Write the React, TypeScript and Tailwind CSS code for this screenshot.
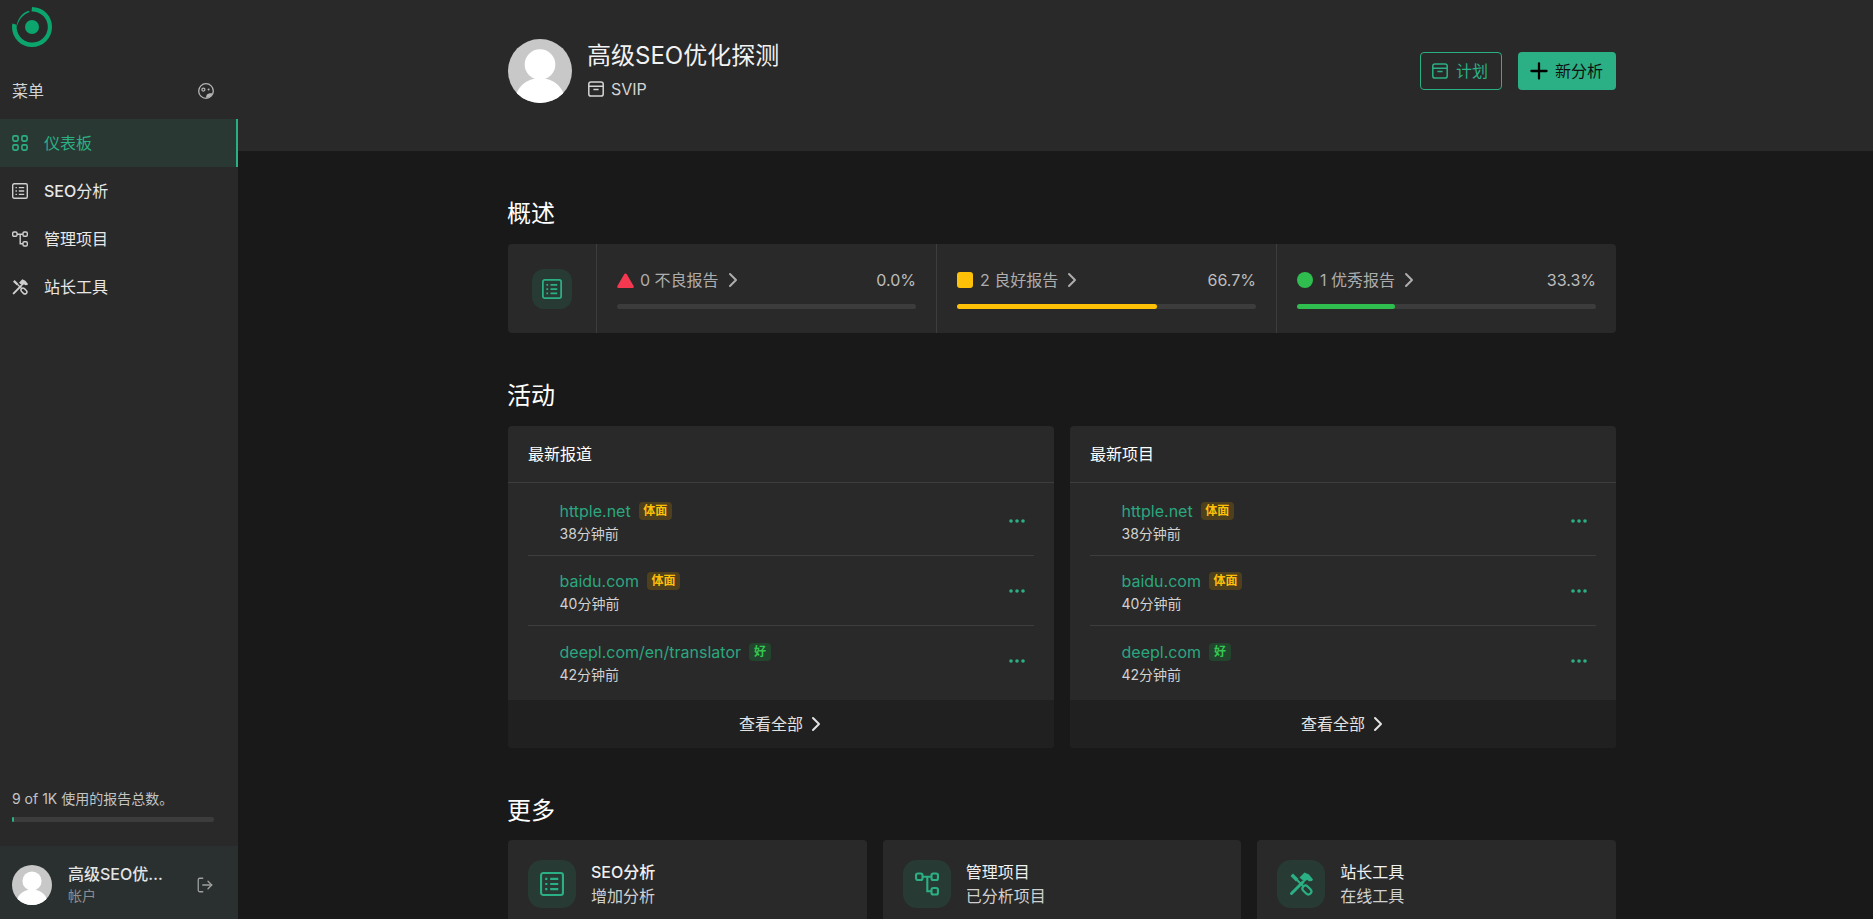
import React from "react";
import { ChevronRight, LogOut, Plus } from "lucide-react";

const font = { fontFamily: "Inter, 'Noto Sans CJK SC', sans-serif" };

function Avatar({ size }: { size: number }) {
  return (
    <svg width={size} height={size} viewBox="0 0 64 64" className="shrink-0">
      <defs>
        <clipPath id={`av${size}`}>
          <circle cx="32" cy="32" r="32" />
        </clipPath>
      </defs>
      <g clipPath={`url(#av${size})`}>
        <rect width="64" height="64" fill="#c8c8c8" />
        <circle cx="32" cy="25.5" r="15.3" fill="#fff" />
        <ellipse cx="32" cy="62" rx="25" ry="23" fill="#fff" />
      </g>
    </svg>
  );
}

function Logo() {
  return (
    <svg width="40" height="40" viewBox="0 0 40 40" className="block">
      <path
        fillRule="evenodd"
        fill="#0ba56d"
        d="M20 0a20 20 0 1 1-20 20c0-1.2.2-2.4.4-3.4l4.4 1.1A15.6 15.6 0 1 0 19.5 4.4z"
      />
      <path fill="#0ba56d" d="M5 17.6C6 11 11 5.2 17 3.8l.6 1.2C12 7 7 12 5.6 18z" />
      <circle cx="20" cy="20" r="7" fill="#0ba56d" />
    </svg>
  );
}

function GridIcon() {
  return (
    <svg width="16" height="16" viewBox="0 0 16 16" fill="none" stroke="currentColor" strokeWidth="1.6" className="shrink-0">
      <rect x="0.9" y="0.9" width="5.2" height="5.2" rx="1.5" />
      <rect x="9.9" y="0.9" width="5.2" height="5.2" rx="1.5" />
      <rect x="0.9" y="9.9" width="5.2" height="5.2" rx="1.5" />
      <rect x="9.9" y="9.9" width="5.2" height="5.2" rx="1.5" />
    </svg>
  );
}

function ListIcon({ size = 16 }: { size?: number }) {
  return (
    <svg width={size} height={size} viewBox="0 0 16 16" fill="none" stroke="currentColor" strokeWidth="1.4" className="shrink-0">
      <rect x="0.7" y="0.7" width="14.6" height="14.6" rx="1.5" />
      <path d="M6.8 4.6h5.4M6.8 8h5.4M6.8 11.4h5.4" />
      <path d="M3.5 4.6h1.4M3.5 8h1.4M3.5 11.4h1.4" />
    </svg>
  );
}

function NodesIcon({ size = 16 }: { size?: number }) {
  return (
    <svg width={size} height={size} viewBox="0 0 16 16" fill="none" stroke="currentColor" strokeWidth="1.4" className="shrink-0">
      <rect x="0.7" y="1" width="4.3" height="4.3" rx="1.2" />
      <rect x="11" y="1" width="4.3" height="4.3" rx="1.2" />
      <rect x="11" y="10.7" width="4.3" height="4.3" rx="1.2" />
      <path d="M5 3.2h6M8.2 3.2v9.6H11" />
    </svg>
  );
}

function ToolsIcon({ size = 16 }: { size?: number }) {
  return (
    <svg width={size} height={size} viewBox="0 0 24 24" fill="none" stroke="currentColor" className="shrink-0">
      <path d="M1.5 4L4 1.5 9.5 7 7 9.5z" fill="currentColor" stroke="none" />
      <path d="M8 8l6 6" strokeWidth="2" />
      <rect x="12.9" y="15" width="10" height="6" rx="3" strokeWidth="2.2" transform="rotate(45 17.9 18)" />
      <path d="M2.5 21.5L14 10" strokeWidth="3" strokeLinecap="round" />
      <path d="M10.5 5.5L15.5 0.5 20 2.5 24 7.5 23 9 20 9.2 18 7.8 15.5 9.8z" fill="currentColor" stroke="none" />
    </svg>
  );
}

function PaletteIcon() {
  return (
    <svg width="16" height="16" viewBox="0 0 16 16" fill="none" stroke="currentColor" strokeWidth="1.3" className="shrink-0">
      <circle cx="8" cy="8" r="7.3" />
      <circle cx="5.4" cy="6.6" r="1.5" />
      <circle cx="10.6" cy="6.4" r="1" fill="currentColor" stroke="none" />
      <path d="M8 14.8c0-2.6 1.2-4.2 3-4.4 1.2-.1 2.8-.1 3.6-.4-.6 2.6-3.2 4.8-6.6 4.8z" fill="currentColor" stroke="none" />
    </svg>
  );
}

function BoxIcon() {
  return (
    <svg width="16" height="16" viewBox="0 0 16 16" fill="none" stroke="currentColor" strokeWidth="1.5" className="shrink-0">
      <rect x="0.8" y="0.9" width="14.4" height="14.2" rx="2.2" />
      <path d="M0.8 5.2h14.4M5.4 8.4h5.2" />
    </svg>
  );
}

function Dots() {
  return (
    <svg width="16" height="4" viewBox="0 0 16 4" fill="#2bb085" className="shrink-0">
      <circle cx="2" cy="2" r="1.8" />
      <circle cx="8" cy="2" r="1.8" />
      <circle cx="14" cy="2" r="1.8" />
    </svg>
  );
}

function NavItem({ icon, label, latin, active }: { icon: React.ReactNode; label: string; latin?: string; active?: boolean }) {
  return active ? (
    <div className="flex h-12 items-center gap-4 border-r-2 border-[#2bb085] bg-[#2a3833] pl-3 text-base text-[#2bb085]">
      {icon}
      <span>{label}</span>
    </div>
  ) : (
    <div className="flex h-12 items-center gap-4 pl-3 text-base text-[#e8e8e8]">
      <span className="text-[#cfcfcf]">{icon}</span>
      <span>
        {latin ? <span className="font-medium">{latin}</span> : null}
        {label}
      </span>
    </div>
  );
}

function Stat({ marker, label, percent, bar, width }: { marker: React.ReactNode; label: string; percent: string; bar: string; width: string }) {
  return (
    <div className="flex w-[340px] flex-col border-l border-[#3d3d3d] px-5 pt-[24px]">
      <div className="flex h-6 items-center">
        <span className="flex w-[23px] shrink-0 items-center">{marker}</span>
        <span className="text-base text-[#adadad]">{label}</span>
        <ChevronRight size={24} strokeWidth={2} className="ml-[2px] text-[#adadad]" />
        <span className="ml-auto text-base text-[#bdbdbd]">{percent}</span>
      </div>
      <div className="mt-[12px] h-[5px] w-full rounded-full bg-[#3c3c3c]">
        <div className={`h-[5px] rounded-full ${bar}`} style={{ width }} />
      </div>
    </div>
  );
}

type Row = { name: string; time: string; good?: boolean };

function ActivityRow({ row, last }: { row: Row; last?: boolean }) {
  return (
    <div className={`flex h-[70px] items-center pl-[31.5px] ${last ? "" : "border-b border-[#3d3d3d]"}`}>
      <div className="flex-1 pt-[2px]">
        <div className="flex h-[24px] items-center">
          <span className="text-base leading-6 text-[#2ba77f]">{row.name}</span>
          {row.good ? (
            <span className="ml-2 flex h-[18px] w-[22px] items-center justify-center rounded-[4px] bg-[#24452d] text-xs font-bold text-[#35c552]">好</span>
          ) : (
            <span className="ml-2 flex h-[18px] w-[33px] items-center justify-center rounded-[4px] bg-[#4e3f1d] text-xs font-bold text-[#ffc107]">体面</span>
          )}
        </div>
        <div className="mt-[1px] text-sm leading-[20px] text-[#d2d2d2]">{row.time}</div>
      </div>
      <span className="mr-[9px]">
        <Dots />
      </span>
    </div>
  );
}

function ActivityCard({ title, rows }: { title: string; rows: Row[] }) {
  return (
    <div className="flex h-[322px] flex-col overflow-hidden rounded-[4px] bg-[#292929]">
      <div className="flex h-[57px] items-center border-b border-[#3d3d3d] px-5 text-base text-white">{title}</div>
      <div className="h-[217px] px-5 pt-[3px]">
        {rows.map((r, i) => (
          <ActivityRow key={r.name} row={r} last={i === rows.length - 1} />
        ))}
      </div>
      <div className="flex h-[48px] items-center justify-center gap-px bg-[#202020] pl-[5px] text-base text-[#e2e2e2]">
        查看全部
        <ChevronRight size={24} strokeWidth={2} />
      </div>
    </div>
  );
}

function MoreCard({ icon, title, sub, bold }: { icon: React.ReactNode; title: string; sub: string; bold?: boolean }) {
  return (
    <div className="flex h-[100px] gap-[15px] rounded-[4px] bg-[#292929] px-5 pt-5">
      <div className="flex h-12 w-12 items-center justify-center rounded-[14px] bg-[#283a34] text-[#2bb085]">{icon}</div>
      <div className="text-base leading-6">
        <div className={`text-[#f0f0f0] ${bold ? "font-medium" : ""}`}>{title}</div>
        <div className="text-[#d0d0d0]">{sub}</div>
      </div>
    </div>
  );
}

const heading = "-ml-px h-[35px] text-2xl leading-[37px] text-white";

const left: Row[] = [
  { name: "httple.net", time: "38分钟前" },
  { name: "baidu.com", time: "40分钟前" },
  { name: "deepl.com/en/translator", time: "42分钟前", good: true },
];
const right: Row[] = [
  { name: "httple.net", time: "38分钟前" },
  { name: "baidu.com", time: "40分钟前" },
  { name: "deepl.com", time: "42分钟前", good: true },
];

export default function App() {
  return (
    <div className="flex h-screen overflow-hidden bg-[#191919]" style={font}>
      <aside className="flex w-[238px] shrink-0 flex-col bg-[#292929]">
        <div className="ml-3 mt-[7px] h-10 w-10">
          <Logo />
        </div>
        <div className="mb-4 mr-6 ml-3 mt-8 flex h-6 items-center justify-between text-base text-[#d4d4d4]">
          <span>菜单</span>
          <span className="text-[#b5b5b5]">
            <PaletteIcon />
          </span>
        </div>
        <NavItem active icon={<GridIcon />} label="仪表板" />
        <NavItem icon={<ListIcon />} latin="SEO" label="分析" />
        <NavItem icon={<NodesIcon />} label="管理项目" />
        <NavItem icon={<ToolsIcon />} label="站长工具" />
        <div className="flex-1" />
        <div className="h-[24px] px-3 text-sm leading-[24px] text-[#c4c4c4]">9 of 1K 使用的报告总数。</div>
        <div className="mb-6 ml-3 mr-6 mt-[6px] h-[5px] rounded-full bg-[#3c3c3c]">
          <div className="h-[5px] w-[2px] rounded-full bg-[#2bb085]" />
        </div>
        <div className="flex h-[73px] items-center bg-[#2a3030] pl-3 pr-6 pt-1">
          <Avatar size={40} />
          <div className="ml-4 w-[96px]">
            <div className="truncate text-base font-medium leading-[22px] text-[#e4e4e4]">高级SEO优化探测</div>
            <div className="text-sm leading-[22px] text-[#8e8e8e]">帐户</div>
          </div>
          <LogOut size={18} strokeWidth={1.7} className="ml-auto text-[#a0a0a0]" />
        </div>
      </aside>

      <main className="min-w-0 flex-1">
        <header className="h-[151px] bg-[#292929] pt-[39px]">
          <div className="ml-[270px] flex w-[1108px] items-center">
            <Avatar size={64} />
            <div className="ml-[15px] flex-1">
              <div className="text-2xl leading-[30px] text-[#f2f2f2]">高级SEO优化探测</div>
              <div className="ml-px mt-[6px] flex items-center gap-[7px] text-base leading-[24px] text-[#d4d4d4]">
                <BoxIcon />
                SVIP
              </div>
            </div>
            <div className="flex items-center gap-4">
              <button className="flex h-[38px] w-[82px] items-center justify-center gap-[8px] rounded-[4px] border border-[#2bb085] pr-[2px] text-base text-[#2bb085]">
                <BoxIcon />
                计划
              </button>
              <button className="flex h-[38px] w-[98px] items-center justify-start gap-[3px] rounded-[4px] bg-[#2bb085] pl-2 text-base text-[#111]">
                <Plus size={26} strokeWidth={2.1} className="text-black" />
                新分析
              </button>
            </div>
          </div>
        </header>

        <div className="ml-[270px] w-[1108px] pt-[44px]">
          <h2 className={heading}>概述</h2>
          <div className="mt-[14px] flex h-[89px] overflow-hidden rounded-[4px] bg-[#292929]">
            <div className="flex w-[88px] items-center justify-center">
              <div className="flex h-10 w-10 items-center justify-center rounded-xl bg-[#283a34] text-[#2bb085]">
                <ListIcon size={20} />
              </div>
            </div>
            <Stat
              marker={
                <svg width="17" height="15" viewBox="0 0 17 15" fill="#f4384f">
                  <path d="M7.3 1.1a1.4 1.4 0 0 1 2.4 0l6.9 12a1.3 1.3 0 0 1-1.2 1.9H1.6A1.3 1.3 0 0 1 .4 13.1z" />
                </svg>
              }
              label="0 不良报告"
              percent="0.0%"
              bar="bg-[#f4384f]"
              width="0%"
            />
            <Stat
              marker={<span className="block h-4 w-4 rounded-[3px] bg-[#ffc107]" />}
              label="2 良好报告"
              percent="66.7%"
              bar="bg-[#ffc107]"
              width="67%"
            />
            <Stat
              marker={<span className="block h-4 w-4 rounded-full bg-[#2ebd4e]" />}
              label="1 优秀报告"
              percent="33.3%"
              bar="bg-[#2ebd4e]"
              width="32.7%"
            />
          </div>

          <h2 className={`mt-[44px] ${heading}`}>活动</h2>
          <div className="mt-[14px] grid grid-cols-2 gap-4">
            <ActivityCard title="最新报道" rows={left} />
            <ActivityCard title="最新项目" rows={right} />
          </div>

          <h2 className={`mt-[44px] ${heading}`}>更多</h2>
          <div className="mt-[13px] grid grid-cols-3 gap-4">
            <MoreCard bold icon={<ListIcon size={24} />} title="SEO分析" sub="增加分析" />
            <MoreCard icon={<NodesIcon size={24} />} title="管理项目" sub="已分析项目" />
            <MoreCard icon={<ToolsIcon size={24} />} title="站长工具" sub="在线工具" />
          </div>
        </div>
      </main>
    </div>
  );
}
